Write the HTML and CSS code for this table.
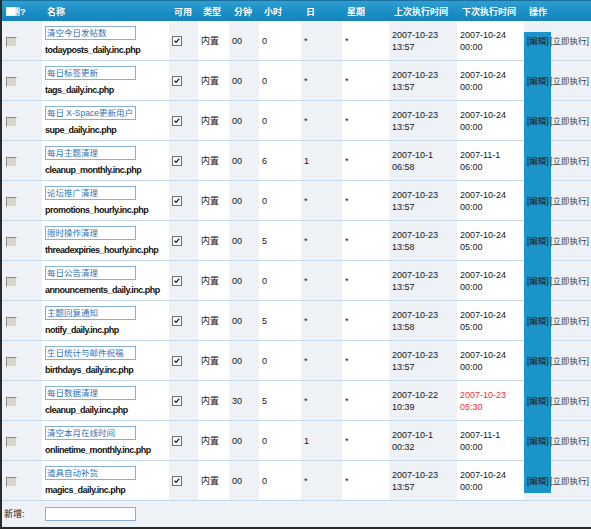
FILE: index.html
```html
<!DOCTYPE html>
<html lang="zh">
<head>
<meta charset="utf-8">
<title>计划任务</title>
<link rel="stylesheet" href="styles.css">
</head>
<body>
<div class="wrap">
  <div class="edit-rail"></div>
  <table class="grid">
    <colgroup>
      <col class="c1"><col class="c2"><col class="c3"><col class="c4"><col class="c5"><col class="c6"><col class="c7"><col class="c8"><col class="c9"><col class="c10"><col class="c11">
    </colgroup>
    <thead>
      <tr>
        <th class="hchk"><span class="chkall-box"></span><span class="chkall-text">删?</span></th>
        <th>名称</th>
        <th>可用</th>
        <th>类型</th>
        <th>分钟</th>
        <th>小时</th>
        <th>日</th>
        <th>星期</th>
        <th>上次执行时间</th>
        <th>下次执行时间</th>
        <th>操作</th>
      </tr>
    </thead>
    <tbody>
      <tr>
        <td class="s"><span class="del"></span></td>
        <td class="name"><span class="inp">清空今日发帖数</span><span class="file">todayposts_daily.inc.php</span></td>
        <td class="s"><svg class="chk" width="10" height="10" viewBox="0 0 10 10"><rect x="0.5" y="0.5" width="9" height="9" fill="#fff" stroke="#6f6f6f"/><path d="M2.5 4.6 L4.1 6.4 L7.4 2.7" fill="none" stroke="#111" stroke-width="1.2"/></svg></td>
        <td>内置</td><td class="s">00</td><td>0</td><td class="s">*</td><td>*</td>
        <td class="s">2007-10-23<br>13:57</td><td>2007-10-24<br>00:00</td>
        <td class="op"><span class="edit">[编辑]</span> <span class="run">[立即执行]</span></td>
      </tr>
      <tr>
        <td class="s"><span class="del"></span></td>
        <td class="name"><span class="inp">每日标签更新</span><span class="file">tags_daily.inc.php</span></td>
        <td class="s"><svg class="chk" width="10" height="10" viewBox="0 0 10 10"><rect x="0.5" y="0.5" width="9" height="9" fill="#fff" stroke="#6f6f6f"/><path d="M2.5 4.6 L4.1 6.4 L7.4 2.7" fill="none" stroke="#111" stroke-width="1.2"/></svg></td>
        <td>内置</td><td class="s">00</td><td>0</td><td class="s">*</td><td>*</td>
        <td class="s">2007-10-23<br>13:57</td><td>2007-10-24<br>00:00</td>
        <td class="op"><span class="edit">[编辑]</span> <span class="run">[立即执行]</span></td>
      </tr>
      <tr>
        <td class="s"><span class="del"></span></td>
        <td class="name"><span class="inp">每日 X-Space更新用户</span><span class="file">supe_daily.inc.php</span></td>
        <td class="s"><svg class="chk" width="10" height="10" viewBox="0 0 10 10"><rect x="0.5" y="0.5" width="9" height="9" fill="#fff" stroke="#6f6f6f"/><path d="M2.5 4.6 L4.1 6.4 L7.4 2.7" fill="none" stroke="#111" stroke-width="1.2"/></svg></td>
        <td>内置</td><td class="s">00</td><td>0</td><td class="s">*</td><td>*</td>
        <td class="s">2007-10-23<br>13:57</td><td>2007-10-24<br>00:00</td>
        <td class="op"><span class="edit">[编辑]</span> <span class="run">[立即执行]</span></td>
      </tr>
      <tr>
        <td class="s"><span class="del"></span></td>
        <td class="name"><span class="inp">每月主题清理</span><span class="file">cleanup_monthly.inc.php</span></td>
        <td class="s"><svg class="chk" width="10" height="10" viewBox="0 0 10 10"><rect x="0.5" y="0.5" width="9" height="9" fill="#fff" stroke="#6f6f6f"/><path d="M2.5 4.6 L4.1 6.4 L7.4 2.7" fill="none" stroke="#111" stroke-width="1.2"/></svg></td>
        <td>内置</td><td class="s">00</td><td>6</td><td class="s">1</td><td>*</td>
        <td class="s">2007-10-1<br>06:58</td><td>2007-11-1<br>06:00</td>
        <td class="op"><span class="edit">[编辑]</span> <span class="run">[立即执行]</span></td>
      </tr>
      <tr>
        <td class="s"><span class="del"></span></td>
        <td class="name"><span class="inp">论坛推广清理</span><span class="file">promotions_hourly.inc.php</span></td>
        <td class="s"><svg class="chk" width="10" height="10" viewBox="0 0 10 10"><rect x="0.5" y="0.5" width="9" height="9" fill="#fff" stroke="#6f6f6f"/><path d="M2.5 4.6 L4.1 6.4 L7.4 2.7" fill="none" stroke="#111" stroke-width="1.2"/></svg></td>
        <td>内置</td><td class="s">00</td><td>0</td><td class="s">*</td><td>*</td>
        <td class="s">2007-10-23<br>13:57</td><td>2007-10-24<br>00:00</td>
        <td class="op"><span class="edit">[编辑]</span> <span class="run">[立即执行]</span></td>
      </tr>
      <tr>
        <td class="s"><span class="del"></span></td>
        <td class="name"><span class="inp">限时操作清理</span><span class="file">threadexpiries_hourly.inc.php</span></td>
        <td class="s"><svg class="chk" width="10" height="10" viewBox="0 0 10 10"><rect x="0.5" y="0.5" width="9" height="9" fill="#fff" stroke="#6f6f6f"/><path d="M2.5 4.6 L4.1 6.4 L7.4 2.7" fill="none" stroke="#111" stroke-width="1.2"/></svg></td>
        <td>内置</td><td class="s">00</td><td>5</td><td class="s">*</td><td>*</td>
        <td class="s">2007-10-23<br>13:58</td><td>2007-10-24<br>05:00</td>
        <td class="op"><span class="edit">[编辑]</span> <span class="run">[立即执行]</span></td>
      </tr>
      <tr>
        <td class="s"><span class="del"></span></td>
        <td class="name"><span class="inp">每日公告清理</span><span class="file">announcements_daily.inc.php</span></td>
        <td class="s"><svg class="chk" width="10" height="10" viewBox="0 0 10 10"><rect x="0.5" y="0.5" width="9" height="9" fill="#fff" stroke="#6f6f6f"/><path d="M2.5 4.6 L4.1 6.4 L7.4 2.7" fill="none" stroke="#111" stroke-width="1.2"/></svg></td>
        <td>内置</td><td class="s">00</td><td>0</td><td class="s">*</td><td>*</td>
        <td class="s">2007-10-23<br>13:57</td><td>2007-10-24<br>00:00</td>
        <td class="op"><span class="edit">[编辑]</span> <span class="run">[立即执行]</span></td>
      </tr>
      <tr>
        <td class="s"><span class="del"></span></td>
        <td class="name"><span class="inp">主题回复通知</span><span class="file">notify_daily.inc.php</span></td>
        <td class="s"><svg class="chk" width="10" height="10" viewBox="0 0 10 10"><rect x="0.5" y="0.5" width="9" height="9" fill="#fff" stroke="#6f6f6f"/><path d="M2.5 4.6 L4.1 6.4 L7.4 2.7" fill="none" stroke="#111" stroke-width="1.2"/></svg></td>
        <td>内置</td><td class="s">00</td><td>5</td><td class="s">*</td><td>*</td>
        <td class="s">2007-10-23<br>13:58</td><td>2007-10-24<br>05:00</td>
        <td class="op"><span class="edit">[编辑]</span> <span class="run">[立即执行]</span></td>
      </tr>
      <tr>
        <td class="s"><span class="del"></span></td>
        <td class="name"><span class="inp">生日统计与邮件祝福</span><span class="file">birthdays_daily.inc.php</span></td>
        <td class="s"><svg class="chk" width="10" height="10" viewBox="0 0 10 10"><rect x="0.5" y="0.5" width="9" height="9" fill="#fff" stroke="#6f6f6f"/><path d="M2.5 4.6 L4.1 6.4 L7.4 2.7" fill="none" stroke="#111" stroke-width="1.2"/></svg></td>
        <td>内置</td><td class="s">00</td><td>0</td><td class="s">*</td><td>*</td>
        <td class="s">2007-10-23<br>13:57</td><td>2007-10-24<br>00:00</td>
        <td class="op"><span class="edit">[编辑]</span> <span class="run">[立即执行]</span></td>
      </tr>
      <tr>
        <td class="s"><span class="del"></span></td>
        <td class="name"><span class="inp">每日数据清理</span><span class="file">cleanup_daily.inc.php</span></td>
        <td class="s"><svg class="chk" width="10" height="10" viewBox="0 0 10 10"><rect x="0.5" y="0.5" width="9" height="9" fill="#fff" stroke="#6f6f6f"/><path d="M2.5 4.6 L4.1 6.4 L7.4 2.7" fill="none" stroke="#111" stroke-width="1.2"/></svg></td>
        <td>内置</td><td class="s">30</td><td>5</td><td class="s">*</td><td>*</td>
        <td class="s">2007-10-22<br>10:39</td><td class="late">2007-10-23<br>05:30</td>
        <td class="op"><span class="edit">[编辑]</span> <span class="run">[立即执行]</span></td>
      </tr>
      <tr>
        <td class="s"><span class="del"></span></td>
        <td class="name"><span class="inp">清空本月在线时间</span><span class="file">onlinetime_monthly.inc.php</span></td>
        <td class="s"><svg class="chk" width="10" height="10" viewBox="0 0 10 10"><rect x="0.5" y="0.5" width="9" height="9" fill="#fff" stroke="#6f6f6f"/><path d="M2.5 4.6 L4.1 6.4 L7.4 2.7" fill="none" stroke="#111" stroke-width="1.2"/></svg></td>
        <td>内置</td><td class="s">00</td><td>0</td><td class="s">1</td><td>*</td>
        <td class="s">2007-10-1<br>00:32</td><td>2007-11-1<br>00:00</td>
        <td class="op"><span class="edit">[编辑]</span> <span class="run">[立即执行]</span></td>
      </tr>
      <tr>
        <td class="s"><span class="del"></span></td>
        <td class="name"><span class="inp">道具自动补货</span><span class="file">magics_daily.inc.php</span></td>
        <td class="s"><svg class="chk" width="10" height="10" viewBox="0 0 10 10"><rect x="0.5" y="0.5" width="9" height="9" fill="#fff" stroke="#6f6f6f"/><path d="M2.5 4.6 L4.1 6.4 L7.4 2.7" fill="none" stroke="#111" stroke-width="1.2"/></svg></td>
        <td>内置</td><td class="s">00</td><td>0</td><td class="s">*</td><td>*</td>
        <td class="s">2007-10-23<br>13:57</td><td>2007-10-24<br>00:00</td>
        <td class="op"><span class="edit">[编辑]</span> <span class="run">[立即执行]</span></td>
      </tr>
      <tr class="add">
        <td colspan="11"><span class="add-label">新增:</span><span class="inp inp-empty"></span></td>
      </tr>
    </tbody>
  </table>
</div>
</body>
</html>
```

FILE: styles.css
```css
html, body {
  margin: 0;
  padding: 0;
}
body {
  width: 589px;
  height: 527px;
  border-left: 2px solid #2a2a2a;
  border-bottom: 2px solid #2a2a2a;
  background: #eef2f7;
  font-family: "Liberation Sans", "Noto Sans CJK SC", sans-serif;
  font-size: 9px;
  color: #161616;
}
.wrap {
  position: relative;
}
.grid {
  width: 589px;
  table-layout: fixed;
  border-collapse: separate;
  border-spacing: 0;
}
.c1 { width: 40px; }
.c2 { width: 127px; }
.c3 { width: 29px; }
.c4 { width: 31px; }
.c5 { width: 30px; }
.c6 { width: 42px; }
.c7 { width: 41px; }
.c8 { width: 47px; }
.c9 { width: 68px; }
.c10 { width: 67px; }
.c11 { width: 67px; }

.grid th {
  box-sizing: border-box;
  height: 21px;
  padding: 0 0 0 5px;
  text-align: left;
  font-weight: bold;
  color: #fff;
  white-space: nowrap;
  background: linear-gradient(#2f9fd1 0%, #1b8ec6 55%, #1684bc 100%);
  border-top: 1px solid #18709e;
}
.grid th.hchk {
  padding-left: 4px;
}
.chkall-box {
  position: relative;
  z-index: 1;
  display: inline-block;
  vertical-align: middle;
  box-sizing: border-box;
  width: 10px;
  height: 9px;
  background: #fff;
  border: 1px solid #e3ecf4;
}
.chkall-text {
  vertical-align: middle;
  margin-left: -5px;
}

.grid td {
  box-sizing: border-box;
  height: 40px;
  padding: 0 0 0 3px;
  vertical-align: middle;
  line-height: 12px;
  background: #fff;
  border-bottom: 1px solid #c4d9ec;
  white-space: nowrap;
}
.grid td.s {
  background: #eef1f6;
}
.grid td.op {
  background: #eef1f6;
  padding-left: 3px;
  font-size: 8.5px;
  color: #3a3a3a;
}
.grid td.late {
  color: #f2302f;
}
.del {
  display: inline-block;
  vertical-align: middle;
  width: 9px;
  height: 8px;
  margin: 1px 0 0 1px;
  background: #d9d6cf;
  border-top: 1px solid #8b877f;
  border-left: 1px solid #8b877f;
  border-right: 1px solid #f2f2f2;
  border-bottom: 1px solid #f2f2f2;
}
.chk {
  display: block;
}
.name .inp {
  margin-bottom: 4px;
}
.inp {
  display: block;
  box-sizing: border-box;
  width: 91px;
  height: 14px;
  padding: 0 1px;
  font-size: 8.5px;
  line-height: 12px;
  color: #2f72b6;
  background: #fff;
  border: 1px solid #86aed6;
  overflow: hidden;
  white-space: nowrap;
}
.file {
  display: block;
  font-weight: bold;
  letter-spacing: -0.5px;
  color: #111;
}
.edit-rail {
  position: absolute;
  left: 522px;
  top: 32px;
  width: 27px;
  height: 461px;
  background: #1b94ca;
}
.edit {
  position: relative;
  color: #1a1a1a;
}
.run {
  position: relative;
  margin-left: -1px;
}
.grid tr.add td {
  height: 26px;
  padding-left: 2px;
  background: #eef2f7;
  border-bottom: 0;
}
.add-label {
  display: inline-block;
  width: 41px;
  vertical-align: middle;
}
.inp-empty {
  display: inline-block;
  vertical-align: middle;
  height: 14px;
}
```
